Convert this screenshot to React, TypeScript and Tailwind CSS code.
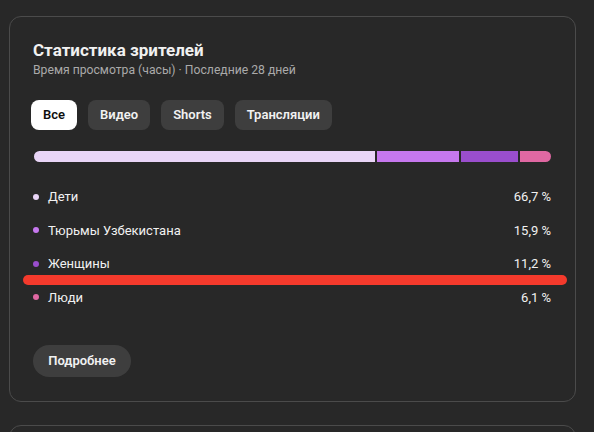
const tabs = ['Все', 'Видео', 'Shorts', 'Трансляции'];

const rows = [
  { label: 'Дети', value: 66.7, color: '#e9d5f7' },
  { label: 'Тюрьмы Узбекистана', value: 15.9, color: '#c678ee' },
  { label: 'Женщины', value: 11.2, color: '#9a4ecd' },
  { label: 'Люди', value: 6.1, color: '#e068a2' },
];

function fmt(v: number) {
  return v.toFixed(1).replace('.', ',') + ' %';
}

export default function App() {
  return (
    <div
      className="relative h-[432px] w-[594px] overflow-hidden bg-[#282828] px-[9px] pt-[16px] text-[#f1f1f1]"
      style={{ fontFamily: 'Roboto, "Noto Sans", sans-serif' }}
    >
      <section className="h-[386px] w-[567px] rounded-[12px] border border-[#4b4b4b] px-6 pt-[21px]">
        <h2 className="text-[17px] font-bold leading-[24px] -ml-px">Статистика зрителей</h2>
        <p className="text-[12.2px] leading-[16px] text-[#aaaaaa] -ml-px">
          Время просмотра (часы) · Последние 28 дней
        </p>

        <div className="mt-[22px] flex gap-[11px] -ml-[3px]">
          {tabs.map((t, i) => (
            <button
              key={t}
              className={
                i === 0
                  ? 'h-[30px] rounded-lg bg-white px-3 text-[13px] font-semibold text-[#0f0f0f]'
                  : 'h-[30px] rounded-lg bg-[#3e3e3e] px-3 text-[13px] font-semibold text-[#f1f1f1]'
              }
            >
              {t}
            </button>
          ))}
        </div>

        <div className="mt-[21px] flex h-[11px] gap-[2px] overflow-hidden rounded-full">
          {rows.map((r) => (
            <div key={r.label} className="h-full" style={{ flexGrow: r.value, flexBasis: 0, backgroundColor: r.color }} />
          ))}
        </div>

        <ul className="mt-[18px]">
          {rows.map((r) => (
            <li key={r.label} className="flex h-[33.5px] items-center text-[13px]">
              <span className="ml-[-1px] mr-[9px] h-[6px] w-[6px] rounded-full" style={{ backgroundColor: r.color }} />
              <span className="flex-1">{r.label}</span>
              <span>{fmt(r.value)}</span>
            </li>
          ))}
        </ul>

        <button className="mt-[31px] -ml-px h-[32px] w-[98px] rounded-full bg-[#3e3e3e] text-[13px] font-semibold text-[#f1f1f1]">
          Подробнее
        </button>
      </section>

      <section className="mt-[23px] h-[60px] w-[567px] rounded-[12px] border border-[#4b4b4b]" />

      <div className="absolute left-[23px] top-[275px] h-[10px] w-[544px] rounded-full bg-[#f43a2c]" />
    </div>
  );
}
